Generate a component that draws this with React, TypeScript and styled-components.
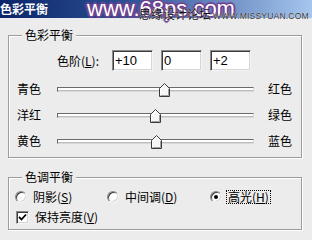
import React from 'react';
import styled, { createGlobalStyle } from 'styled-components';

const Global = createGlobalStyle`
  html, body { margin: 0; padding: 0; background: #ececec; }
  body { font-family: "Noto Sans CJK SC", "Liberation Sans", sans-serif; }
  * { box-sizing: border-box; }
`;

const Window = styled.div`
  width: 312px;
  height: 240px;
  background: #ececec;
  position: relative;
  overflow: hidden;
  font-size: 12px;
  color: #000;
  display: flex;
  flex-direction: column;
`;

const TitleBar = styled.div`
  height: 18px;
  flex: none;
  position: relative;
  display: flex;
  align-items: center;
  background: linear-gradient(to right, #0a246a 0%, #2c4f92 40%, #a6c6ee 100%);
`;

const Title = styled.span`
  color: #fff;
  font-weight: bold;
  font-size: 12px;
  line-height: 18px;
`;

const WaterMark = styled.span`
  position: absolute;
  left: 87px;
  top: -2px;
  font-family: "Liberation Sans", Arial, sans-serif;
  font-size: 22px;
  line-height: 22px;
  color: #fff;
  white-space: nowrap;
  text-shadow: -1px -1px 0 #6b3f8e, 1px -1px 0 #6b3f8e, -1px 1px 0 #6b3f8e, 1px 1px 0 #6b3f8e,
    0 2px 1px #7a4e9c, 2px 0 1px #7a4e9c, 0 -2px 1px #7a4e9c, -2px 0 1px #7a4e9c;
`;

const SubMark = styled.span`
  position: absolute;
  left: 139px;
  top: 7px;
  display: flex;
  align-items: baseline;
  white-space: nowrap;
  color: #111;
  font-size: 12px;
  line-height: 14px;
  text-shadow: 0 0 1px #fff;
`;

const SubLatin = styled.span`
  font-family: "Liberation Sans", Arial, sans-serif;
  font-size: 8.5px;
  color: #333;
  margin-left: 2px;
  letter-spacing: 0.2px;
`;

const Body = styled.div`
  flex: 1;
  display: flex;
  flex-direction: column;
  padding: 10px 0 0 8px;
  gap: 12px;
`;

const Group = styled.fieldset<{ $h: number }>`
  width: 294px;
  height: ${(p) => p.$h}px;
  margin: 0;
  padding: 0;
  border: 1px solid #9c9c9c;
  box-shadow: inset 1px 1px 0 #fff, 1px 1px 0 #fff;
  min-width: 0;
`;

const Legend = styled.legend`
  margin-left: 13px;
  padding: 0 3px;
  font-size: 12px;
  line-height: 14px;
  height: 14px;
  background: #ececec;
`;

const Content = styled.div<{ $pt: number }>`
  display: flex;
  flex-direction: column;
  padding-top: ${(p) => p.$pt}px;
`;

const LevelsRow = styled.div`
  display: flex;
  align-items: center;
  height: 21px;
  padding-left: 48px;
  margin-bottom: 5px;
`;

const LevelsLabel = styled.span`
  width: 55px;
  flex: none;
  line-height: 14px;
`;

const Fields = styled.div`
  display: flex;
  gap: 8px;
`;

const Field = styled.div`
  width: 41px;
  height: 21px;
  background: #fff;
  border: 1px solid;
  border-color: #8a8a8a #f4f4f4 #f4f4f4 #8a8a8a;
  box-shadow: inset 1px 1px 0 #3c3c3c, inset -1px -1px 0 #d6d6d6;
  font-family: "Liberation Sans", Arial, sans-serif;
  font-size: 13px;
  line-height: 19px;
  padding-left: 2px;
`;

const SliderRow = styled.div`
  display: flex;
  align-items: center;
  height: 26px;
  padding-left: 8px;
`;

const SideLabel = styled.span<{ $w: number }>`
  width: ${(p) => p.$w}px;
  flex: none;
  line-height: 14px;
`;

const Track = styled.div`
  position: relative;
  width: 197px;
  height: 5px;
  flex: none;
  margin-right: 14px;
  background: #fff;
  border: 1px solid;
  border-color: #6a6a6a #d8d8d8 #d8d8d8 #6a6a6a;
  box-shadow: inset 0 -1px 0 #bdbdbd;
`;

const Thumb = styled.svg`
  position: absolute;
  top: -5px;
  width: 11px;
  height: 14px;
  overflow: visible;
`;

const OptionRow = styled.div`
  display: grid;
  grid-template-columns: 92px 103px auto;
  align-items: center;
  height: 18px;
  padding-left: 6px;
`;

const CheckRow = styled.div`
  display: flex;
  align-items: center;
  height: 18px;
  padding-left: 7px;
  margin-top: 2px;
`;

const Option = styled.div`
  display: flex;
  align-items: center;
  gap: 6px;
  line-height: 14px;
`;

const Radio = styled.span<{ $on?: boolean }>`
  width: 12px;
  height: 12px;
  flex: none;
  border-radius: 50%;
  background: #fff;
  border: 1px solid;
  border-color: #8a8a8a #f2f2f2 #f2f2f2 #8a8a8a;
  box-shadow: inset 1px 1px 0 #3c3c3c, inset -1px -1px 0 #d6d6d6;
  display: flex;
  align-items: center;
  justify-content: center;
  &::after {
    content: '';
    width: 4px;
    height: 4px;
    border-radius: 50%;
    background: ${(p) => (p.$on ? '#000' : 'transparent')};
  }
`;

const CheckBox = styled.span`
  width: 13px;
  height: 13px;
  flex: none;
  background: #fff;
  border: 1px solid;
  border-color: #8a8a8a #f2f2f2 #f2f2f2 #8a8a8a;
  box-shadow: inset 1px 1px 0 #3c3c3c, inset -1px -1px 0 #d6d6d6;
  display: flex;
  align-items: center;
  justify-content: center;
`;

const Focus = styled.span`
  border: 1px dotted #000;
  padding: 0 1px;
  margin-left: -2px;
  line-height: 12px;
`;

const sliders = [
  { left: '青色', right: '红色', value: 10 },
  { left: '洋红', right: '绿色', value: 0 },
  { left: '黄色', right: '蓝色', value: 2 },
];

const ThumbShape = ({ value }: { value: number }) => {
  const pct = (value + 100) / 200;
  return (
    <Thumb style={{ left: `calc(${pct * 100}% - 6px)` }} viewBox="0 0 11 14">
      <polygon points="0.5,5.5 5.5,0.5 10.5,5.5 10.5,13.5 0.5,13.5" fill="#f6f6f6" stroke="#3a3a3a" strokeWidth="1" />
      <polyline points="1.5,13 1.5,6 5.5,2" fill="none" stroke="#ffffff" strokeWidth="1" />
      <polyline points="1.5,12.5 9.5,12.5 9.5,6" fill="none" stroke="#a0a0a0" strokeWidth="1" />
    </Thumb>
  );
};

export default function App() {
  return (
    <Window>
      <Global />
      <TitleBar>
        <Title>色彩平衡</Title>
        <WaterMark>www.68ps.com</WaterMark>
        <SubMark>
          思缘设计论坛<SubLatin>WWW.MISSYUAN.COM</SubLatin>
        </SubMark>
      </TitleBar>
      <Body>
        <Group $h={130}>
          <Legend>色彩平衡</Legend>
          <Content $pt={8}>
            <LevelsRow>
              <LevelsLabel>
                色阶(<u>L</u>):
              </LevelsLabel>
              <Fields>
                <Field>+10</Field>
                <Field>0</Field>
                <Field>+2</Field>
              </Fields>
            </LevelsRow>
            {sliders.map((s) => (
              <SliderRow key={s.left}>
                <SideLabel $w={40}>{s.left}</SideLabel>
                <Track>
                  <ThumbShape value={s.value} />
                </Track>
                <SideLabel $w={30}>{s.right}</SideLabel>
              </SliderRow>
            ))}
          </Content>
        </Group>
        <Group $h={60}>
          <Legend>色调平衡</Legend>
          <Content $pt={4}>
            <OptionRow>
              <Option>
                <Radio />
                <span>
                  阴影(<u>S</u>)
                </span>
              </Option>
              <Option>
                <Radio />
                <span>
                  中间调(<u>D</u>)
                </span>
              </Option>
              <Option>
                <Radio $on />
                <Focus>
                  高光(<u>H</u>)
                </Focus>
              </Option>
            </OptionRow>
            <CheckRow>
              <Option>
                <CheckBox>
                  <svg width="9" height="9" viewBox="0 0 9 9">
                    <path d="M1 4 L3.5 6.5 L8 1.5" fill="none" stroke="#000" strokeWidth="1.8" />
                  </svg>
                </CheckBox>
                <span>
                  保持亮度(<u>V</u>)
                </span>
              </Option>
            </CheckRow>
          </Content>
        </Group>
      </Body>
    </Window>
  );
}
